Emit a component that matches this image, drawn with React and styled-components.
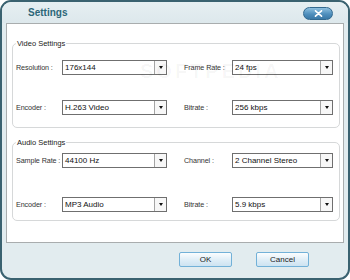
import React from "react";
import styled, { createGlobalStyle } from "styled-components";

const Global = createGlobalStyle`
  html, body { margin: 0; padding: 0; background: #ffffff; }
  body { font-family: "Liberation Sans", Arial, sans-serif; }
`;

const Window = styled.div`
  position: relative;
  width: 350px;
  height: 280px;
  box-sizing: border-box;
  border: 2px solid #3a6270;
  border-radius: 11px;
  background: #e2ecef;
  display: flex;
  flex-direction: column;
  overflow: hidden;
`;

const Header = styled.div`
  height: 21px;
  flex: none;
  display: flex;
  align-items: center;
  justify-content: space-between;
  padding: 0 15px 0 26px;
  background: linear-gradient(#e6eff2, #dde8ec);
`;

const Title = styled.div`
  font-weight: bold;
  font-size: 10px;
  color: #2c6678;
`;

const CloseButton = styled.div`
  width: 30px;
  height: 13px;
  box-sizing: border-box;
  border: 1px solid #32698f;
  border-radius: 7px;
  background: linear-gradient(#8ec0df, #4f8fbd 55%, #3a78a6);
  display: flex;
  align-items: center;
  justify-content: center;
  margin-top: 1px;
`;

const Panel = styled.div`
  flex: none;
  height: 220px;
  box-sizing: border-box;
  margin: 0 4px;
  border: 1px solid #a9adae;
  background: #ffffff;
  padding: 19px 3px 0 5px;
  display: flex;
  flex-direction: column;
  gap: 14px;
`;

const Group = styled.div`
  position: relative;
  box-sizing: border-box;
  height: ${(p) => p.$h}px;
  border: 1px solid #d6d8d9;
  border-radius: 5px;
  padding: ${(p) => p.$pt}px 0 0 2px;
  display: flex;
  flex-direction: column;
  gap: ${(p) => p.$gap}px;
`;

const GroupTitle = styled.span`
  position: absolute;
  top: -5px;
  left: 3px;
  padding: 0 1px;
  background: #ffffff;
  font-size: 7.5px;
  line-height: 9px;
  color: #222;
`;

const Row = styled.div`
  display: grid;
  grid-template-columns: 47px 105px 17px 48px 101px;
  align-items: center;
  height: 15px;
`;

const Label = styled.span`
  grid-column: ${(p) => p.$col};
  padding-left: ${(p) => (p.$col === 1 ? 1 : 0)}px;
  font-size: 7.2px;
  letter-spacing: -0.1px;
  color: #333;
  white-space: nowrap;
`;

const Select = styled.div`
  height: 15px;
  box-sizing: border-box;
  border: 1px solid #6f6f6f;
  background: #fff;
  display: flex;
  align-items: stretch;
  grid-column: ${(p) => p.$col};
`;

const SelectText = styled.span`
  flex: 1;
  font-size: 8px;
  line-height: 13px;
  padding-left: 2px;
  color: #111;
  white-space: nowrap;
  overflow: hidden;
`;

const Arrow = styled.span`
  width: 11px;
  flex: none;
  border-left: 1px solid #a4a4a4;
  background: #f7f7f7;
  display: flex;
  align-items: center;
  justify-content: center;
  &::after {
    content: "";
    border-left: 2.5px solid transparent;
    border-right: 2.5px solid transparent;
    border-top: 3px solid #111;
  }
`;

const Footer = styled.div`
  flex: 1;
  display: flex;
  justify-content: flex-end;
  align-items: flex-start;
  gap: 24px;
  padding: 9px 39px 0 0;
`;

const Button = styled.div`
  width: 53px;
  height: 15px;
  box-sizing: border-box;
  border: 1px solid #72b1d8;
  border-radius: 2px;
  background: linear-gradient(#fbfdfe, #dcecf6 60%, #cde3f1);
  font-size: 8px;
  color: #222;
  display: flex;
  align-items: center;
  justify-content: center;
`;

const Watermark = styled.div`
  position: absolute;
  left: 138px;
  top: 58px;
  font-size: 20px;
  letter-spacing: 3px;
  font-weight: bold;
  color: rgba(0, 0, 0, 0.04);
  pointer-events: none;
`;

const Field = ({ label, value, col }) => (
  <>
    <Label $col={col === 2 ? 4 : 1}>{label}</Label>
    <Select $col={col === 2 ? 5 : 2}>
      <SelectText>{value}</SelectText>
      <Arrow />
    </Select>
  </>
);

export default function App() {
  return (
    <>
      <Global />
      <Window>
        <Header>
          <Title>Settings</Title>
          <CloseButton>
            <svg width="9" height="7" viewBox="0 0 9 7">
              <path d="M1.5 0.8 L7.5 6.2 M7.5 0.8 L1.5 6.2" stroke="#fff" strokeWidth="1.6" strokeLinecap="round" />
            </svg>
          </CloseButton>
        </Header>
        <Panel>
          <Group $h={85} $pt={16} $gap={25}>
            <GroupTitle>Video Settings</GroupTitle>
            <Row>
              <Field label="Resolution :" value="176x144" col={1} />
              <Field label="Frame Rate :" value="24 fps" col={2} />
            </Row>
            <Row>
              <Field label="Encoder :" value="H.263 Video" col={1} />
              <Field label="Bitrate :" value="256 kbps" col={2} />
            </Row>
          </Group>
          <Group $h={79} $pt={10} $gap={29}>
            <GroupTitle>Audio Settings</GroupTitle>
            <Row>
              <Field label="Sample Rate :" value="44100 Hz" col={1} />
              <Field label="Channel :" value="2 Channel Stereo" col={2} />
            </Row>
            <Row>
              <Field label="Encoder :" value="MP3 Audio" col={1} />
              <Field label="Bitrate :" value="5.9 kbps" col={2} />
            </Row>
          </Group>
        </Panel>
        <Footer>
          <Button>OK</Button>
          <Button>Cancel</Button>
        </Footer>
        <Watermark>SOFTPEDIA</Watermark>
      </Window>
    </>
  );
}
